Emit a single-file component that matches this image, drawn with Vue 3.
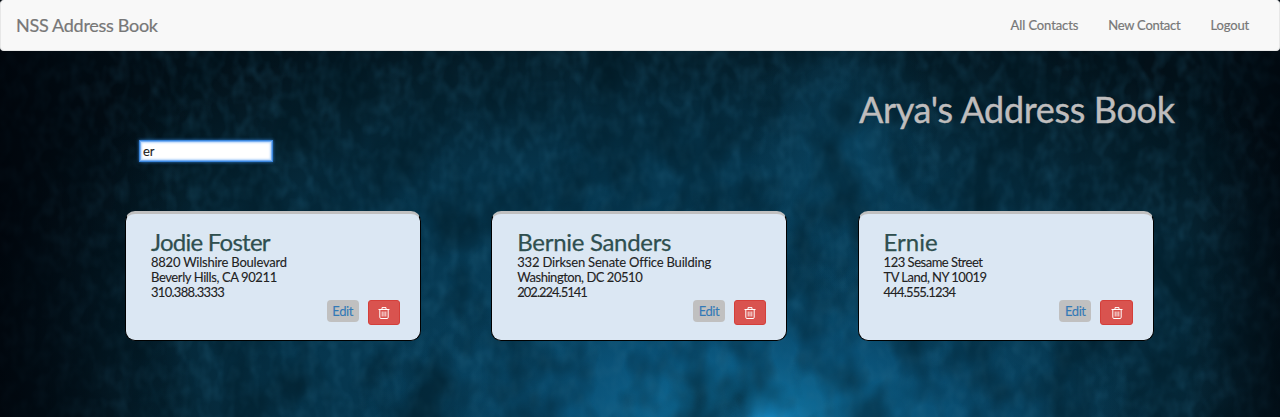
<script setup>
const contacts = [
  { id: 'a', name: 'Jodie Foster', street: '8820 Wilshire Boulevard', city: 'Beverly Hills, CA 90211', phone: '310.388.3333' },
  { id: 'b', name: 'Bernie Sanders', street: '332 Dirksen Senate Office Building', city: 'Washington, DC 20510', phone: '202.224.5141' },
  { id: 'c', name: 'Ernie', street: '123 Sesame Street', city: 'TV Land, NY 10019', phone: '444.555.1234' }
]
</script>

<template>
  <div class="page">
    <svg class="backdrop" width="1280" height="417" aria-hidden="true">
      <defs>
        <radialGradient id="glow" gradientUnits="userSpaceOnUse" cx="0" cy="0" r="1" gradientTransform="translate(755 420) scale(400 160)">
          <stop offset="0" stop-color="#1a96d6" />
          <stop offset=".15" stop-color="#10719f" stop-opacity=".85" />
          <stop offset=".5" stop-color="#0c5c87" stop-opacity=".6" />
          <stop offset="1" stop-color="#0a4765" stop-opacity="0" />
        </radialGradient>
        <radialGradient id="wide" gradientUnits="userSpaceOnUse" cx="0" cy="0" r="1" gradientTransform="translate(680 350) scale(730 370)">
          <stop offset="0" stop-color="#084564" />
          <stop offset=".5" stop-color="#06364e" />
          <stop offset=".8" stop-color="#05202d" />
          <stop offset="1" stop-color="#031018" />
        </radialGradient>
        <radialGradient id="upper" gradientUnits="userSpaceOnUse" cx="0" cy="0" r="1" gradientTransform="translate(845 150) scale(95 150)">
          <stop offset="0" stop-color="#0c5275" stop-opacity=".65" />
          <stop offset="1" stop-color="#0c4866" stop-opacity="0" />
        </radialGradient>
        <linearGradient id="edge" x1="0" x2="1" y1="0" y2="0">
          <stop offset="0" stop-color="#000309" stop-opacity=".8" />
          <stop offset=".15" stop-color="#000309" stop-opacity="0" />
          <stop offset=".93" stop-color="#000309" stop-opacity="0" />
          <stop offset="1" stop-color="#000309" stop-opacity=".6" />
        </linearGradient>
        <filter id="clouds" x="0" y="0" width="100%" height="100%" color-interpolation-filters="sRGB">
          <feTurbulence type="fractalNoise" baseFrequency=".022 .016" numOctaves="3" seed="8" />
          <feColorMatrix values="0 0 0 0 0  0 0 0 0 .09  0 0 0 0 .13  2.2 0 0 0 -.8" />
        </filter>
        <filter id="mist" x="0" y="0" width="100%" height="100%" color-interpolation-filters="sRGB">
          <feTurbulence type="fractalNoise" baseFrequency=".085 .06" numOctaves="2" seed="21" />
          <feColorMatrix values="0 0 0 0 .16  0 0 0 0 .42  0 0 0 0 .54  0 1.8 0 0 -.7" />
        </filter>
      </defs>
      <rect width="1280" height="417" fill="url(#wide)" />
      <rect width="1280" height="417" fill="url(#upper)" />
      <rect width="1280" height="417" fill="url(#glow)" />
      <rect width="1280" height="417" filter="url(#mist)" opacity=".3" />
      <rect width="1280" height="417" filter="url(#clouds)" opacity=".55" />
      <rect width="1280" height="417" fill="url(#edge)" />
    </svg>
    <nav class="navbar">
      <a class="brand">NSS Address Book</a>
      <div class="links"><a class="all">All Contacts</a><a class="new">New Contact</a><a class="out">Logout</a></div>
    </nav>
    <main class="container">
      <h1>Arya's Address Book</h1>
      <input class="search" value="er" aria-label="Search">
      <section class="cards">
        <article v-for="c in contacts" :key="c.id" class="card" :class="c.id">
          <h3>{{ c.name }}</h3>
          <p class="street">{{ c.street }}</p>
          <p class="city">{{ c.city }}</p>
          <p class="phone">{{ c.phone }}</p>
          <div class="actions">
            <a class="edit">Edit</a>
            <button class="delete" aria-label="Delete">
              <svg width="12" height="12" viewBox="0 0 12 12" fill="none" stroke="#fff">
                <path d="M.5 2.5h11M4 2.2V.6h4v1.6M1.8 3v7.3q0 1.2 1.2 1.2h6q1.2 0 1.2-1.2V3" />
                <path d="M4.2 4.5v5M6 4.5v5M7.8 4.5v5" stroke-width=".85" />
              </svg>
            </button>
          </div>
        </article>
      </section>
    </main>
  </div>
</template>

<style>
body { margin: 0; background: #000; }
</style>
<style scoped>
* { box-sizing: border-box; }
.page { position: relative; width: 1280px; height: 417px; overflow: hidden; font: 13px/15px Lato, "Open Sans", sans-serif; color: #222; -webkit-text-stroke: .1px; }
.backdrop { position: absolute; inset: 0; }
.navbar { position: relative; display: flex; justify-content: space-between; align-items: center; height: 51px; padding: 0 30px 1px 15px; background: #f8f8f8; border: 1px solid #e7e7e7; border-top-color: #f8f8f8; border-radius: 4px; color: #777; -webkit-text-stroke: .2px; }
.brand { font-size: 18px; line-height: 20px; letter-spacing: -.29px; }
.links { display: flex; gap: 30px; }
.all { letter-spacing: -.1px; }
.new { letter-spacing: -.25px; }
.out { letter-spacing: -.15px; }
.container { position: relative; width: 1110px; margin-left: 125.2px; padding-top: 38px; }
h1 { width: 318px; margin: 0 0 0 733.8px; font-size: 36px; line-height: 40px; font-weight: 400; letter-spacing: -.33px; color: #bfbdbd; white-space: nowrap; -webkit-text-stroke: .4px; }
.search { display: block; width: 132px; height: 20px; margin: 11.5px 0 0 14.8px; padding: 1px 2px 0; border: 1px solid #79b0f3; outline: 0; background: #fff; box-shadow: 0 0 0 1px #3b86dc, 0 0 3px 1px #2d76c8, inset 0 0 2px 1px #b9d7fb; font: inherit; color: #222; }
.cards { display: grid; grid-template-columns: repeat(3, 296px); column-gap: 70.3px; margin-top: 50.5px; }
.card { height: 130px; padding: 16px 20px 0 24.8px; border: 1px solid #000; border-top: 3px solid #c0c0c0; border-radius: 10px; background: #dbe7f3; white-space: nowrap; }
h3 { margin: 0; font-size: 24px; line-height: 24px; font-weight: 400; color: #2f4f4f; height: 25px; -webkit-text-stroke: .25px; }
p { margin: 0; }
.a h3 { letter-spacing: -.75px; }
.b h3 { letter-spacing: -.3px; }
.a .street { letter-spacing: -.23px; }
.b .street { letter-spacing: -.2px; }
.c .street { letter-spacing: -.48px; }
.a .city { letter-spacing: -.4px; }
.b .city { letter-spacing: -.47px; }
.c .city { letter-spacing: -.53px; }
.a .phone { letter-spacing: -.7px; }
.b .phone { letter-spacing: -1px; }
.c .phone { letter-spacing: -.83px; }
.actions { display: flex; justify-content: flex-end; align-items: flex-start; gap: 9px; }
.edit { width: 32.2px; height: 22px; border-radius: 4px; background: #c0c0c0; color: #337ab7; text-align: center; line-height: 22px; letter-spacing: -.4px; }
.delete { width: 32.4px; height: 25px; padding: 0; border: 1px solid #d43f3a; border-radius: 3px; background: #d9534f; display: flex; align-items: center; justify-content: center; }
</style>
